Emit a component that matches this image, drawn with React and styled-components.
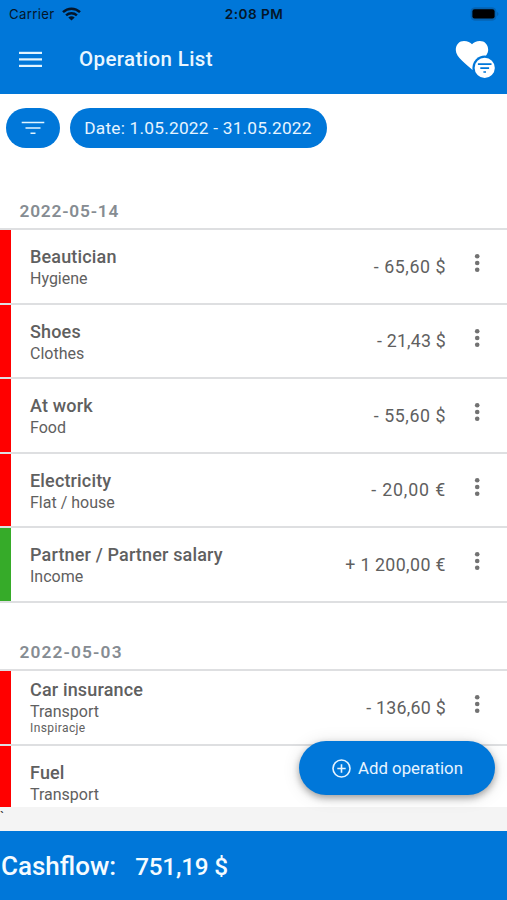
// core
import React from 'react'
import styled, { createGlobalStyle } from 'styled-components'

// theme
const colors = {
  blue: '#0077d9',
  red: '#ff0000',
  green: '#36ab29',
  text: '#5f6060',
  muted: '#868c92',
  line: '#dedfe1',
  strip: '#f4f4f4',
}

const fonts = {
  body: 'Roboto, "Liberation Sans", sans-serif',
  status: 'Inter, "Liberation Sans", sans-serif',
}

// data
const days = [
  {
    date: '2022-05-14',
    dateSpacing: 0.8,
    operations: [
      { name: 'Beautician', category: 'Hygiene', amount: '- 65,60 $', spacing: 0.55 },
      { name: 'Shoes', category: 'Clothes', amount: '- 21,43 $', spacing: 0.2 },
      { name: 'At work', category: 'Food', amount: '- 55,60 $', spacing: 0.55 },
      { name: 'Electricity', category: 'Flat / house', amount: '- 20,00 €', spacing: 0.85 },
      { name: 'Partner / Partner salary', category: 'Income', amount: '+ 1\u2009200,00 €', spacing: 0.4, income: true },
    ],
  },
  {
    date: '2022-05-03',
    dateSpacing: 1.15,
    operations: [
      { name: 'Car insurance', category: 'Transport', note: 'Inspiracje', amount: '- 136,60 $', spacing: 0.25 },
      { name: 'Fuel', category: 'Transport' },
    ],
  },
]

// styles
const GlobalStyle = createGlobalStyle`
  * {
    box-sizing: border-box;
  }

  body {
    margin: 0;
    background: #fff;
    font-family: ${fonts.body};
  }
`

const Screen = styled.div`
  display: flex;
  flex-direction: column;
  position: relative;
  width: 507px;
  height: 900px;
  overflow: hidden;
  background: #fff;
`

const Header = styled.header`
  flex: none;
  height: 93.5px;
  background: ${colors.blue};
`

const StatusBar = styled.div`
  display: grid;
  grid-template-columns: 1fr auto 1fr;
  align-items: center;
  height: 27px;
  padding: 0 8px 0 9px;
  font-family: ${fonts.status};
  font-size: 13.2px;
  color: #04162a;
`

const Carrier = styled.div`
  display: flex;
  align-items: center;
  gap: 7px;
  letter-spacing: 0.35px;
`

const Clock = styled.div`
  font-size: 13.6px;
  font-weight: 600;
  letter-spacing: 0.45px;
`

const Battery = styled.svg`
  justify-self: end;
`

const Toolbar = styled.div`
  display: flex;
  align-items: center;
  height: 64px;
  padding: 0 12px 0 19px;
`

const Title = styled.h1`
  flex: 1;
  margin: 0 0 0 37px;
  font-size: 20.5px;
  font-weight: 500;
  letter-spacing: 0.4px;
  color: #e9f6ff;
`

const Filters = styled.div`
  display: flex;
  flex: none;
  gap: 9.5px;
  padding: 14.5px 6px 0;
`

const Chip = styled.button`
  display: flex;
  align-items: center;
  justify-content: center;
  width: ${props => props.$width}px;
  height: 39.5px;
  padding: 0;
  border: 0;
  border-radius: 20px;
  background: ${colors.blue};
  color: #e6f4ff;
  font-family: ${fonts.body};
  font-size: 17.3px;
  letter-spacing: 0.22px;
  white-space: nowrap;
`

const List = styled.main`
  flex: 1;
  min-height: 0;
  overflow: hidden;
  padding-top: 35px;
`

const DateHeading = styled.h2`
  height: 47.5px;
  margin: 0;
  padding: 16.5px 0 0 19.5px;
  border-bottom: 2px solid ${colors.line};
  font-size: 17.3px;
  font-weight: 600;
  line-height: 24px;
  letter-spacing: ${props => props.$spacing}px;
  color: ${colors.muted};
`

const Day = styled.section`
  & + & {
    padding-top: 21px;
  }
`

const Row = styled.article`
  display: flex;
  align-items: center;
  height: 74.5px;
  border-bottom: 2px solid ${colors.line};
  background: linear-gradient(${props => (props.$income ? colors.green : colors.red)}, ${props => (props.$income ? colors.green : colors.red)}) 0 0 / 11px 100% no-repeat padding-box;
  padding: 0 26px 0 30px;
  color: ${colors.text};
`

const Info = styled.div`
  flex: 1;
  padding: ${props => (props.$tall ? '0 0 1px' : '3px 0 0')};
`

const Name = styled.div`
  font-size: 18px;
  font-weight: 500;
  line-height: 22px;
  letter-spacing: 0.16px;
`

const Category = styled.div`
  font-size: 16px;
  line-height: 21.5px;
`

const Note = styled.div`
  font-size: 12px;
  line-height: 13px;
  letter-spacing: 0.4px;
`

const Amount = styled.div`
  margin-right: 27px;
  font-size: 17.8px;
  letter-spacing: ${props => props.$spacing}px;
  white-space: pre;
`

const Dots = styled.svg`
  margin-bottom: 6px;
`

const Strip = styled.div`
  flex: none;
  height: 24px;
  background: ${colors.strip};
  color: #333;
  font-size: 14px;
  line-height: 20px;
`

const Footer = styled.footer`
  display: flex;
  flex: none;
  align-items: baseline;
  gap: 19px;
  height: 69px;
  padding: 20px 0 0 1px;
  background: ${colors.blue};
  color: #f5fbff;
  font-weight: 500;
  line-height: 30px;
`

const Total = styled.span`
  font-size: ${props => props.$size}px;
  letter-spacing: ${props => (props.$tight ? '-0.2px' : 'normal')};
`

const AddButton = styled.button`
  position: absolute;
  right: 12px;
  bottom: 105px;
  display: flex;
  align-items: center;
  justify-content: center;
  gap: 7px;
  width: 196px;
  height: 54px;
  padding: 0 0 0 1px;
  border: 0;
  border-radius: 27px;
  background: ${colors.blue};
  box-shadow: 0 3px 7px rgba(0, 0, 0, 0.32), 0 2px 18px rgba(0, 0, 0, 0.12);
  color: #e6f4ff;
  font-family: ${fonts.body};
  font-size: 16.8px;
  letter-spacing: 0;
`

// icons
const WifiIcon = () => (
  <svg width="19" height="14" viewBox="0 0 19 14" fill="none" stroke="#04162a" strokeWidth="2.5">
    <path d="M1 5.1C5.8 .5 13.2 .5 18 5.1" />
    <path d="M4.1 8.4C7.2 5.6 11.8 5.6 14.9 8.4" />
    <path d="M6.3 10.4C8.1 8.8 10.9 8.8 12.7 10.4L9.5 13.6Z" fill="#04162a" stroke="none" />
  </svg>
)

const BatteryIcon = () => (
  <Battery width="29" height="14" viewBox="0 0 29 14">
    <rect x="1" y=".7" width="25" height="12.6" rx="3.8" fill="#0462b0" stroke="#0567b8" strokeWidth="1" />
    <rect x="2.4" y="2.3" width="22.2" height="9.2" rx="2.2" fill="#000" />
    <path d="M27.2 5v4c1.6-.6 1.6-3.4 0-4z" fill="#0560ad" />
  </Battery>
)

const MenuIcon = () => (
  <svg width="23" height="17" viewBox="0 0 23 17" fill="#e2f5ff">
    <rect y=".8" width="23" height="2.2" />
    <rect y="7.3" width="23" height="2.2" />
    <rect y="13.8" width="23" height="2.2" />
  </svg>
)

const FavouriteFilterIcon = () => (
  <svg width="41" height="40" viewBox="0 0 41 40">
    <path d="M18.5 31C12.5 25 1.8 18.4 1.8 10.9C1.8 5.4 5.4 2 10 2C13.7 2 16.4 3.5 18 5.2C19.6 3.5 22.4 2 25.8 2C30.6 2 34.2 5.4 34.2 10.9C34.2 17.2 23.7 25.5 18.5 31Z" fill="#fff" />
    <circle cx="30.7" cy="28.9" r="12.3" fill={colors.blue} />
    <circle cx="30.7" cy="28.9" r="10.1" fill="#fff" />
    <path d="M23.9 25.1h13.6M26.3 29.2h8.8M29.4 33h2.6" stroke={colors.blue} strokeWidth="1.7" />
  </svg>
)

const FilterIcon = () => (
  <svg width="24" height="14" viewBox="0 0 24 14" fill="none" stroke="#e2f5ff" strokeWidth="1.6">
    <path d="M.7 1.5h22.6M4.5 7h15M9.5 12.2h5" />
  </svg>
)

const PlusIcon = () => (
  <svg width="19" height="19" viewBox="0 0 19 19" fill="none" stroke="#e6f4ff" strokeWidth="1.6">
    <circle cx="9.5" cy="9.5" r="8.5" />
    <path d="M9.5 5.3v8.4M5.3 9.5h8.4" />
  </svg>
)

const DotsIcon = () => (
  <Dots width="8" height="20" viewBox="0 0 8 20" fill="#727272">
    <circle cx="4.2" cy="3.2" r="2.3" />
    <circle cx="4.2" cy="10" r="2.3" />
    <circle cx="4.2" cy="16.8" r="2.3" />
  </Dots>
)

// components
const Operation = ({ name, category, note, amount, spacing, income }) => (
  <Row $income={income}>
    <Info $tall={Boolean(note)}>
      <Name>{name}</Name>
      <Category>{category}</Category>
      {note && <Note>{note}</Note>}
    </Info>
    {amount && <Amount $spacing={spacing}>{amount}</Amount>}
    {amount && <DotsIcon />}
  </Row>
)

//render
const App = () => (
  <>
    <GlobalStyle />
    <Screen>
      <Header>
        <StatusBar>
          <Carrier>Carrier <WifiIcon /></Carrier>
          <Clock>2:08 PM</Clock>
          <BatteryIcon />
        </StatusBar>
        <Toolbar>
          <MenuIcon />
          <Title>Operation List</Title>
          <FavouriteFilterIcon />
        </Toolbar>
      </Header>
      <Filters>
        <Chip $width={54} aria-label="Filter"><FilterIcon /></Chip>
        <Chip $width={257}>Date: 1.05.2022 - 31.05.2022</Chip>
      </Filters>
      <List>
        {days.map(day => (
          <Day key={day.date}>
            <DateHeading $spacing={day.dateSpacing}>{day.date}</DateHeading>
            {day.operations.map(operation => (
              <Operation key={operation.name} {...operation} />
            ))}
          </Day>
        ))}
      </List>
      <Strip>`</Strip>
      <Footer>
        <Total $size={26}>Cashflow:</Total>
        <Total $size={24.3} $tight>751,19 $</Total>
      </Footer>
      <AddButton><PlusIcon />Add operation</AddButton>
    </Screen>
  </>
)

export default App
